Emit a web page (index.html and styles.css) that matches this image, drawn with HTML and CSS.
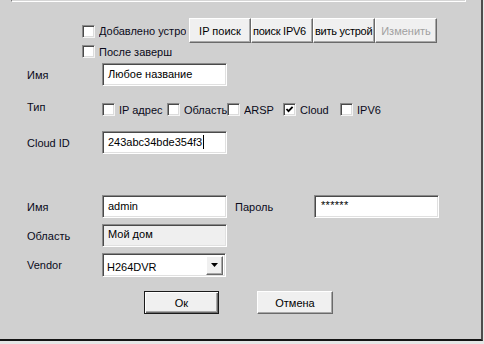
FILE: index.html
```html
<!DOCTYPE html>
<html lang="ru">
<head>
<meta charset="utf-8">
<title>Добавить устройство</title>
<link rel="stylesheet" href="styles.css">
</head>
<body>
<div class="dialog">
  <div class="listbox"></div>
  <div class="top">
    <div class="chk chk-add"><span class="box"></span><span class="txt">Добавлено устро</span></div>
    <div class="btnbar">
      <div class="btn">IP поиск</div>
      <div class="btn btn-tight">поиск IPV6</div>
      <div class="btn btn-tight">вить устрой</div>
      <div class="btn disabled">Изменить</div>
    </div>
    <div class="chk chk-after"><span class="box"></span><span class="txt">После заверш</span></div>
  </div>

  <div class="form">
    <div class="row r-name">
      <span class="lbl">Имя</span>
      <div class="input">Любое название</div>
    </div>

    <div class="row r-type">
      <span class="lbl lbl-type">Тип</span>
      <div class="types">
        <div class="chk t1"><span class="box"></span><span class="txt">IP адрес</span></div>
        <div class="chk t2"><span class="box"></span><span class="txt">Область</span></div>
        <div class="chk t3"><span class="box"></span><span class="txt">ARSP</span></div>
        <div class="chk t4"><span class="box checked"><svg viewBox="0 0 11 11" width="11" height="11"><path d="M2.5 5 L4.5 7.2 L8.6 2.8" fill="none" stroke="#000" stroke-width="1.8"/></svg></span><span class="txt">Cloud</span></div>
        <div class="chk t5"><span class="box"></span><span class="txt">IPV6</span></div>
      </div>
    </div>

    <div class="row r-cloud">
      <span class="lbl">Cloud ID</span>
      <div class="input focus"><span class="caret">243abc34bde354f3</span></div>
    </div>

    <div class="row r-user">
      <span class="lbl">Имя</span>
      <div class="input">admin</div>
      <span class="lbl lbl-pass">Пароль</span>
      <div class="input pass">******</div>
    </div>

    <div class="row r-area">
      <span class="lbl">Область</span>
      <div class="input disabled-input">Мой дом</div>
    </div>

    <div class="row r-vendor">
      <span class="lbl">Vendor</span>
      <div class="select">
        <span class="sel-text">H264DVR</span>
        <span class="drop"><svg viewBox="0 0 7 4" width="7" height="4"><path d="M0 0 H7 L3.5 4 Z" fill="#000"/></svg></span>
      </div>
    </div>

    <div class="row r-actions">
      <div class="btn btn-ok default">Ок</div>
      <div class="btn btn-cancel">Отмена</div>
    </div>
  </div>
</div>
</body>
</html>
```

FILE: styles.css
```css
* { box-sizing: border-box; }

html, body {
  margin: 0;
  padding: 0;
  background: #e6e6e6;
}

body {
  font-family: "Liberation Sans", Arial, sans-serif;
  font-size: 11px;
  color: #0a0a1a;
}

.dialog {
  width: 483px;
  height: 341px;
  background: #d0d0d0;
  border-right: 2px solid #4c4c4c;
  border-bottom: 2px solid #141414;
  overflow: hidden;
}

.listbox {
  margin-left: 11px;
  width: 455px;
  height: 2px;
  border-left: 1px solid #7a7a7a;
  border-right: 1px solid #ffffff;
  border-bottom: 1px solid #ffffff;
  background: #d6d6d6;
}

.top {
  display: grid;
  grid-template-columns: 107px auto;
  grid-template-rows: 25px 14px;
  margin: 16px 0 0 82px;
}

.btnbar {
  display: flex;
}

.btn {
  width: 62px;
  height: 25px;
  background: #f0f0f0;
  border: 1px solid;
  border-color: #ffffff #6a6a6a #6a6a6a #ffffff;
  box-shadow: inset -1px -1px 0 #a8a8a8;
  display: flex;
  align-items: center;
  justify-content: center;
  white-space: nowrap;
  overflow: hidden;
  color: #000;
}

.btn-tight {
  letter-spacing: -0.25px;
  justify-content: flex-start;
  padding-left: 1px;
}

.btn.disabled {
  color: #a0a0a0;
}

.chk {
  display: flex;
  align-items: center;
  gap: 4px;
  white-space: nowrap;
  overflow: hidden;
}

.chk .txt {
  min-width: 0;
  overflow: hidden;
}

.chk-add {
  width: 104px;
  margin-top: 1px;
}

.chk-after {
  width: 96px;
  align-self: start;
  margin-top: 2px;
}

.box {
  flex: none;
  width: 13px;
  height: 13px;
  background: #ffffff;
  border: 1px solid;
  border-color: #8a8a8a #f4f4f4 #f4f4f4 #8a8a8a;
  box-shadow: inset 1px 1px 0 #4a4a4a, inset -1px -1px 0 #dcdcdc;
  display: flex;
  align-items: center;
  justify-content: center;
}

.box svg { display: block; }

.form {
  padding-left: 27px;
  margin-top: 6px;
}

.row {
  display: flex;
  align-items: center;
}

.lbl {
  width: 75px;
  flex: none;
  white-space: nowrap;
}

.input {
  width: 125px;
  height: 23px;
  flex: none;
  background: #ffffff;
  border: 1px solid;
  border-color: #8a8a8a #ffffff #ffffff #8a8a8a;
  box-shadow: inset 1px 1px 0 #4a4a4a, inset -1px -1px 0 #e0e0e0;
  padding: 0 4px 1px 5px;
  display: flex;
  align-items: center;
  white-space: nowrap;
  overflow: hidden;
  color: #000;
}

.caret {
  border-right: 1px solid #000;
  padding-right: 1px;
  line-height: 14px;
}

.disabled-input {
  background: #efefef;
  align-items: flex-start;
  padding-top: 3px;
}

.pass {
  align-items: flex-start;
  padding-top: 3px;
  padding-left: 6px;
  letter-spacing: 0.3px;
}

.r-name { height: 23px; }

.r-type {
  height: 13px;
  margin-top: 17px;
}

.lbl-type {
  margin-top: -5px;
}

.types {
  display: flex;
}

.t1 { width: 65px; }
.t2 { width: 60px; }
.t3 { width: 56px; }
.t4 { width: 57px; }

.r-cloud {
  height: 23px;
  margin-top: 15px;
}

.r-user {
  height: 23px;
  margin-top: 41px;
}

.lbl-pass {
  width: 79px;
  margin-left: 8px;
}

.r-area {
  height: 23px;
  margin-top: 6px;
}

.r-vendor {
  height: 24px;
  margin-top: 6px;
}

.select {
  width: 124px;
  height: 24px;
  flex: none;
  background: #ffffff;
  border: 1px solid;
  border-color: #8a8a8a #ffffff #ffffff #8a8a8a;
  box-shadow: inset 1px 1px 0 #4a4a4a, inset -1px -1px 0 #e0e0e0;
  display: flex;
  align-items: center;
  padding: 2px 2px 2px 4px;
}

.sel-text {
  flex: 1;
  padding-top: 3px;
  color: #000;
}

.drop {
  width: 17px;
  height: 19px;
  background: #f0f0f0;
  border: 1px solid;
  border-color: #ffffff #6a6a6a #6a6a6a #ffffff;
  box-shadow: inset -1px -1px 0 #a8a8a8;
  display: flex;
  align-items: center;
  justify-content: center;
}

.drop svg { display: block; }

.r-actions {
  margin-top: 14px;
  padding-left: 117px;
  gap: 38px;
}

.btn-ok, .btn-cancel {
  height: 23px;
  width: 75px;
}

.btn-cancel { width: 76px; }

.btn.default {
  border: 1px solid #1a1a1a;
  box-shadow: inset 1px 1px 0 #ffffff, inset -1px -1px 0 #6a6a6a, inset -2px -2px 0 #a8a8a8;
}
```
